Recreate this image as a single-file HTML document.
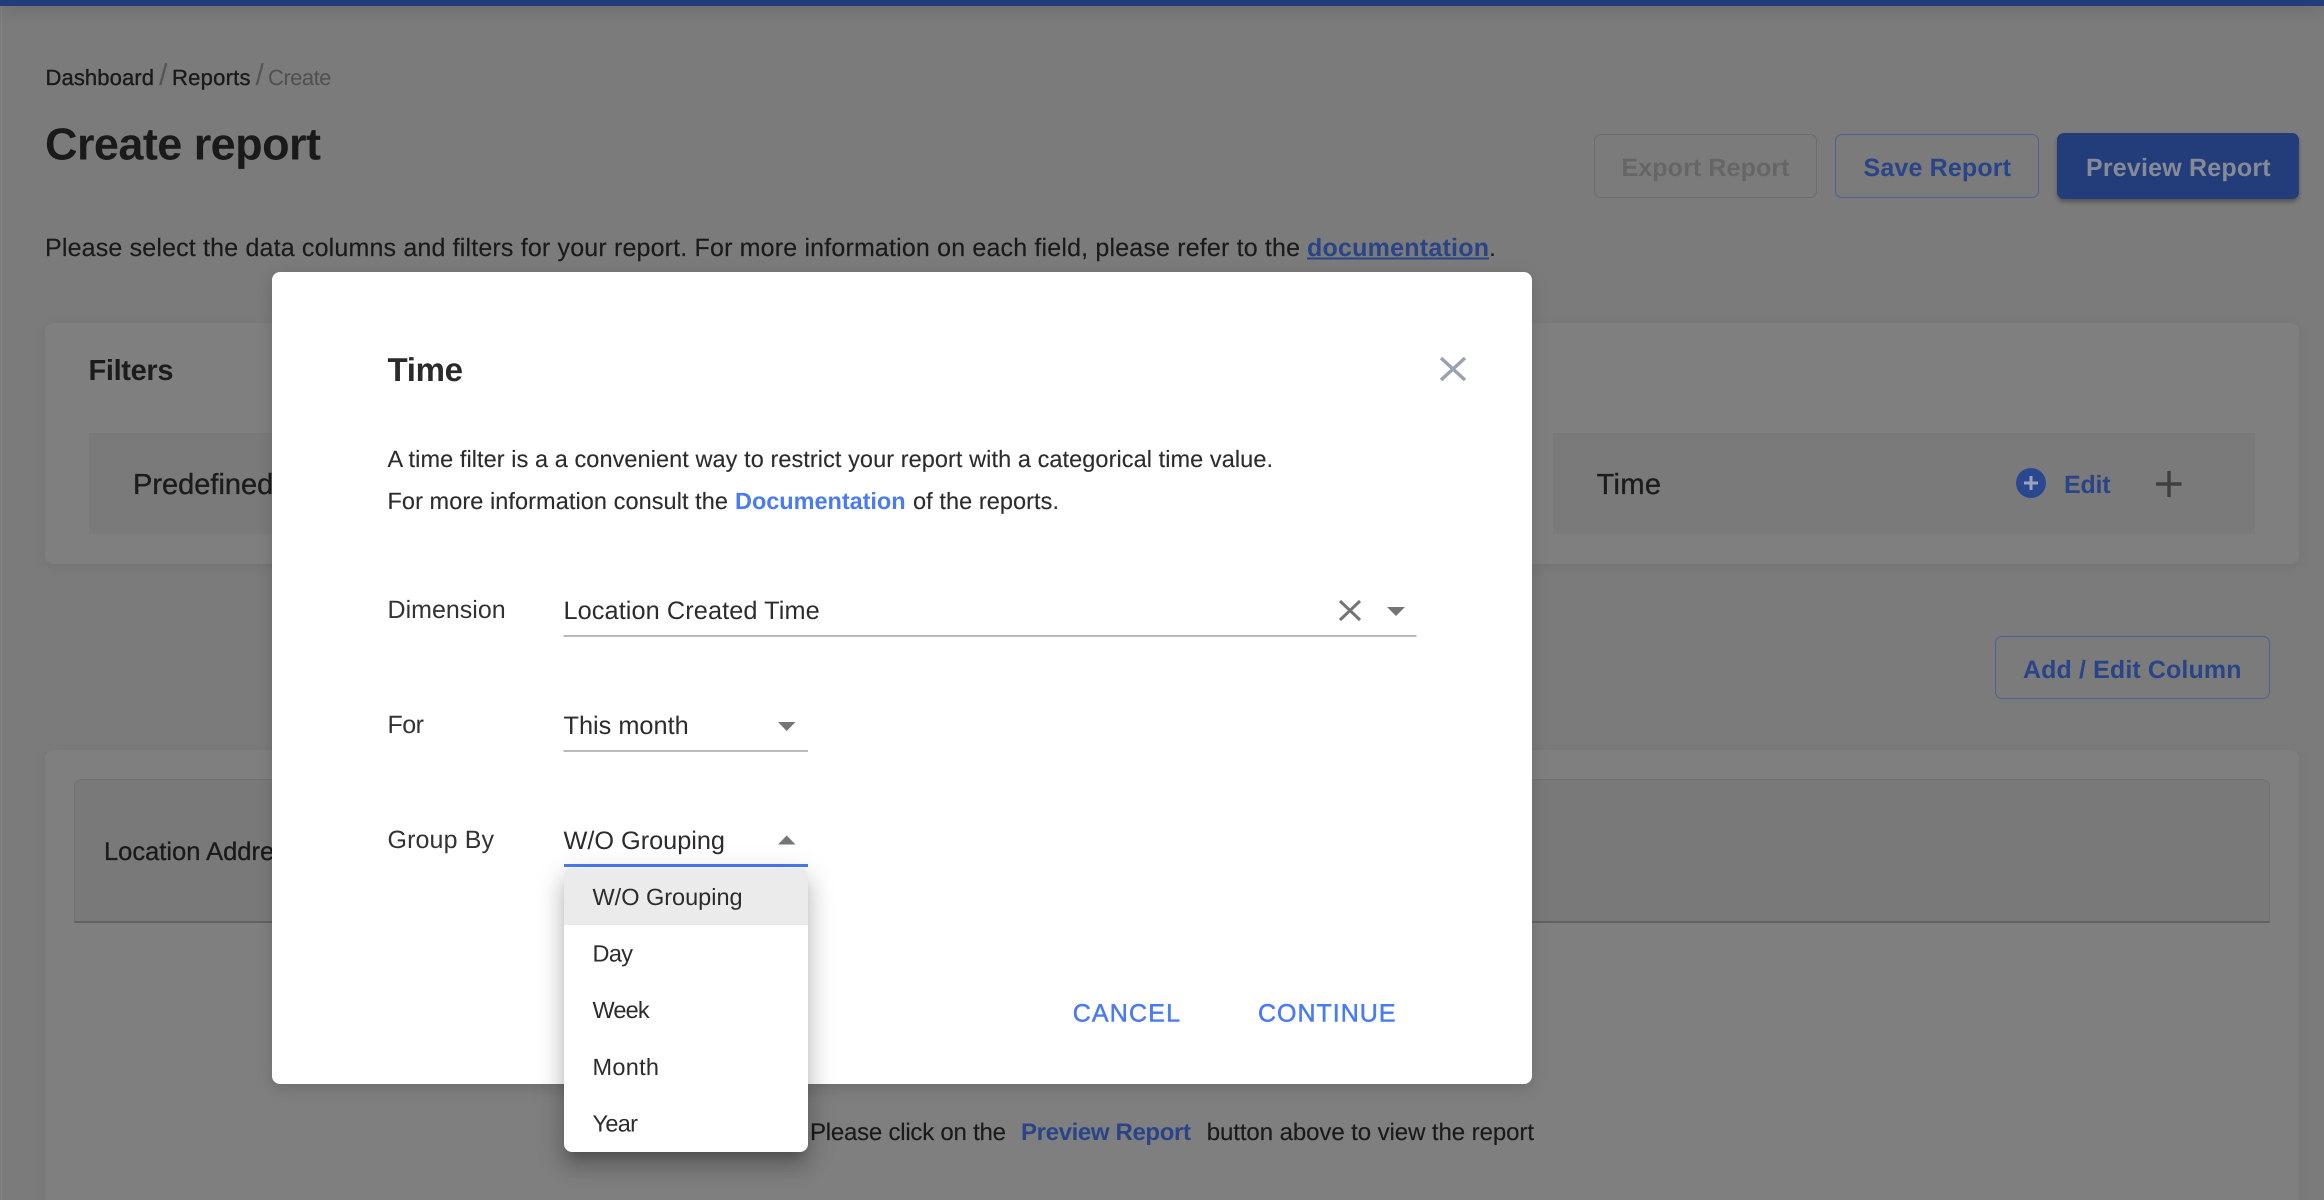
<!DOCTYPE html>
<html lang="en">
<head>
<meta charset="utf-8">
<title>Create report</title>
<style>
html,body{margin:0;padding:0;width:2324px;height:1200px;overflow:hidden;background:#7b7b7b}
body{position:relative;font-family:"Liberation Sans",sans-serif}
.a{position:absolute;box-sizing:border-box}
svg.t{position:absolute;left:0;top:0;width:2324px;height:1200px;font-family:"Liberation Sans",sans-serif;filter:blur(.3px)}
svg.t text{text-rendering:geometricPrecision}
.b{font-weight:700}
</style>
</head>
<body>
<div class="a" style="left:1px;top:0;width:1px;height:1200px;background:#838383"></div>
<div class="a" style="left:0;top:0;width:2324px;height:6px;background:#233d7b;box-shadow:0 4px 14px rgba(0,0,0,.18)"></div>

<!-- Header buttons -->
<div class="a" style="left:1594px;top:134px;width:223px;height:64px;border:1.5px solid #6c6c6c;border-radius:7px"></div>
<div class="a" style="left:1835px;top:134px;width:204px;height:64px;border:1.5px solid #4c6296;border-radius:7px"></div>
<div class="a" style="left:2057px;top:133px;width:242px;height:66px;background:#233d7b;border-radius:7px;box-shadow:0 3px 4px rgba(0,0,0,.3)"></div>

<!-- Filters card -->
<div class="a" style="left:45px;top:323px;width:2254px;height:241px;background:#7f7f7f;border-radius:8px;box-shadow:0 3px 12px rgba(0,0,0,.07)"></div>
<div class="a" style="left:89px;top:433px;width:500px;height:101px;background:#7a7a7a"></div>
<div class="a" style="left:1553px;top:433px;width:702px;height:101px;background:#7a7a7a"></div>

<!-- Add / edit column -->
<div class="a" style="left:1995px;top:636px;width:275px;height:63px;border:1.5px solid #4c6296;border-radius:7px"></div>

<!-- Table card -->
<div class="a" style="left:45px;top:750px;width:2254px;height:470px;background:#7f7f7f;border-radius:8px;box-shadow:0 3px 12px rgba(0,0,0,.07)"></div>
<div class="a" style="left:74px;top:779px;width:2196px;height:144px;background:#797979;border:1.5px solid #717171;border-bottom:2px solid #626262;border-radius:8px 8px 0 0"></div>

<svg class="t" viewBox="0 0 2324 1200">
  <text x="45.500" y="85" font-size="22" fill="#1a1a1a" stroke="#1a1a1a" stroke-width=".35" textLength="108.500" lengthAdjust="spacing">Dashboard</text>
  <text x="159" y="85" font-size="30" fill="#555">/</text>
  <text x="172" y="85" font-size="22" fill="#1a1a1a" stroke="#1a1a1a" stroke-width=".35" textLength="78.500" lengthAdjust="spacing">Reports</text>
  <text x="255.500" y="85" font-size="30" fill="#555">/</text>
  <text x="268" y="85" font-size="22" fill="#505050" textLength="63.400" lengthAdjust="spacing">Create</text>
  <text class="b" x="45" y="159.500" font-size="45" fill="#1a1a1a" textLength="276" lengthAdjust="spacing">Create report</text>

  <text class="b" x="1621.500" y="176" font-size="25" fill="#666" textLength="168" lengthAdjust="spacing">Export Report</text>
  <text class="b" x="1863.500" y="176" font-size="25" fill="#2a4488" textLength="147.500" lengthAdjust="spacing">Save Report</text>
  <text class="b" x="2086" y="176" font-size="25" fill="#858a96" textLength="184.600" lengthAdjust="spacing">Preview Report</text>

  <text x="45" y="256" font-size="25" fill="#1a1a1a" stroke="#1a1a1a" stroke-width=".15" textLength="1255" lengthAdjust="spacing">Please select the data columns and filters for your report. For more information on each field, please refer to the</text>
  <text class="b" x="1307" y="256" font-size="25" fill="#2a4488" textLength="182" lengthAdjust="spacing">documentation</text>
  <rect x="1307" y="257.500" width="182" height="2" fill="#2a4488"/>
  <text x="1489" y="256" font-size="25" fill="#1a1a1a">.</text>

  <text class="b" x="88.500" y="380" font-size="29" fill="#1c1c1c" textLength="85" lengthAdjust="spacing">Filters</text>
  <text x="133" y="494" font-size="29" fill="#1c1c1c" stroke="#1c1c1c" stroke-width=".35">Predefined</text>
  <text x="1596.500" y="494" font-size="29" fill="#1c1c1c" stroke="#1c1c1c" stroke-width=".35" textLength="64.500" lengthAdjust="spacing">Time</text>
  <circle cx="2031" cy="483" r="15" fill="#2a4890"/>
  <path d="M2031 476v14M2024 483h14" stroke="#9aa4bd" stroke-width="3" fill="none"/>
  <text class="b" x="2064" y="493" font-size="25" fill="#2a4488" textLength="46.600" lengthAdjust="spacing">Edit</text>
  <path d="M2169 471v26M2156 484h25.500" stroke="#3f3f3f" stroke-width="3.400" fill="none"/>

  <text class="b" x="2023" y="678" font-size="25" fill="#2a4488" textLength="218.500" lengthAdjust="spacing">Add / Edit Column</text>

  <text x="104" y="860" font-size="25.500" fill="#1a1a1a" stroke="#1a1a1a" stroke-width=".3">Location Address</text>

  <text x="810" y="1140" font-size="24" fill="#1a1a1a" stroke="#1a1a1a" stroke-width=".15" textLength="196" lengthAdjust="spacing">Please click on the</text>
  <text class="b" x="1021" y="1140" font-size="24" fill="#2a4488" textLength="170" lengthAdjust="spacing">Preview Report</text>
  <text x="1206.700" y="1140" font-size="24" fill="#1a1a1a" stroke="#1a1a1a" stroke-width=".15" textLength="327.300" lengthAdjust="spacing">button above to view the report</text>
</svg>

<!-- Modal -->
<div class="a" style="left:272px;top:272px;width:1260px;height:812px;background:#fff;border-radius:8px;box-shadow:0 4px 16px rgba(0,0,0,.15)"></div>
<svg class="t" viewBox="0 0 2324 1200">
  <text class="b" x="387.500" y="381" font-size="33" fill="#2a2a2a" textLength="75.500" lengthAdjust="spacing">Time</text>
  <path d="M1441 358L1465 380M1465 358L1441 380" stroke="#9aa1af" stroke-width="3.400" fill="none"/>

  <text x="387.500" y="467" font-size="23.500" fill="#2c2c2c" stroke="#2c2c2c" stroke-width=".12" textLength="885.500" lengthAdjust="spacing">A time filter is a a convenient way to restrict your report with a categorical time value.</text>
  <text x="387.500" y="509" font-size="23.500" fill="#2c2c2c" stroke="#2c2c2c" stroke-width=".12" textLength="340.500" lengthAdjust="spacing">For more information consult the</text>
  <text class="b" x="735" y="509" font-size="23.500" fill="#4a7bf0" textLength="170.600" lengthAdjust="spacing">Documentation</text>
  <text x="913" y="509" font-size="23.500" fill="#2c2c2c" stroke="#2c2c2c" stroke-width=".12" textLength="146" lengthAdjust="spacing">of the reports.</text>

  <text x="387.500" y="618" font-size="25" fill="#333" textLength="118.200" lengthAdjust="spacing">Dimension</text>
  <text x="563.500" y="619" font-size="25.300" fill="#2c2c2c" textLength="256.200" lengthAdjust="spacing">Location Created Time</text>
  <path d="M1340 601L1360 620M1360 601L1340 620" stroke="#757575" stroke-width="3" fill="none"/>
  <path d="M1387 607H1405L1396 616Z" fill="#757575"/>
  <rect x="563.500" y="635.200" width="853" height="1.500" fill="#a3a3a3"/>

  <text x="387.500" y="733" font-size="25" fill="#333" textLength="36.500" lengthAdjust="spacing">For</text>
  <text x="563.500" y="734" font-size="25.300" fill="#2c2c2c" textLength="125.200" lengthAdjust="spacing">This month</text>
  <path d="M778 722H795.500L786.700 731Z" fill="#757575"/>
  <rect x="563.500" y="750.200" width="244.500" height="1.500" fill="#a3a3a3"/>

  <text x="387.500" y="848" font-size="25" fill="#333" textLength="106.500" lengthAdjust="spacing">Group By</text>
  <text x="563.500" y="849" font-size="25.300" fill="#2c2c2c" textLength="161.500" lengthAdjust="spacing">W/O Grouping</text>
  <path d="M778 844.500H795.500L786.700 835.500Z" fill="#757575"/>
  <rect x="564" y="864" width="244" height="3" fill="#4a7bf0"/>

  <text x="1072.700" y="1021.700" font-size="25" fill="#4a7bf0" stroke="#4a7bf0" stroke-width=".5" textLength="107.300" lengthAdjust="spacing">CANCEL</text>
  <text x="1258" y="1021.700" font-size="25" fill="#4a7bf0" stroke="#4a7bf0" stroke-width=".5" textLength="137.500" lengthAdjust="spacing">CONTINUE</text>
</svg>

<!-- Dropdown -->
<div class="a" style="left:564px;top:868px;width:244px;height:284px;background:#fff;border-radius:8px;box-shadow:0 10px 10px -6px rgba(0,0,0,.2),0 16px 20px 2px rgba(0,0,0,.14),0 6px 28px 4px rgba(0,0,0,.12)">
  <div class="a" style="left:0;top:0;width:244px;height:57px;background:#ebebeb;border-radius:8px 8px 0 0"></div>
</div>
<svg class="t" viewBox="0 0 2324 1200">
  <text x="592.500" y="905" font-size="23.500" fill="#2c2c2c" textLength="150.100" lengthAdjust="spacing">W/O Grouping</text>
  <text x="592.500" y="961.700" font-size="23.500" fill="#2c2c2c" textLength="40.500" lengthAdjust="spacing">Day</text>
  <text x="592.500" y="1018" font-size="23.500" fill="#2c2c2c" textLength="57.100" lengthAdjust="spacing">Week</text>
  <text x="592.500" y="1075" font-size="23.500" fill="#2c2c2c" textLength="66.500" lengthAdjust="spacing">Month</text>
  <text x="592.500" y="1131.700" font-size="23.500" fill="#2c2c2c" textLength="45.500" lengthAdjust="spacing">Year</text>
</svg>
</body>
</html>
